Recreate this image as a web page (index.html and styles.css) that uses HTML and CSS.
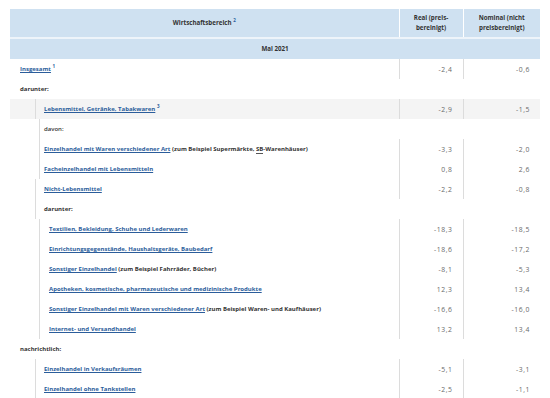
FILE: index.html
```html
<!DOCTYPE html>
<html lang="de">
<head>
  <meta charset="UTF-8" />
  <meta name="viewport" content="width=device-width, initial-scale=1.0" />
  <title>Einzelhandelsumsatz Mai 2021</title>
  <link rel="stylesheet" href="styles.css">
</head>
<body>

<table class="tabelle">
  <colgroup>
    <col class="spalte_text">
    <col class="spalte_real">
    <col class="spalte_nominal">
  </colgroup>
  <thead>
    <tr class="kopf">
      <th>Wirtschaftsbereich <sup>2</sup></th>
      <th>Real (preis-<br>bereinigt)</th>
      <th>Nominal (nicht<br>preisbereinigt)</th>
    </tr>
    <tr class="kopf_monat">
      <th colspan="3">Mai 2021</th>
    </tr>
  </thead>
  <tbody>
    <tr>
      <td><div class="stufe_0"><a href="#">Insgesamt</a> <sup>1</sup></div></td>
      <td class="zahl">-2,4</td>
      <td class="zahl">-0,6</td>
    </tr>
    <tr>
      <td colspan="3"><div class="stufe_0 fett">darunter:</div></td>
    </tr>
    <tr class="markiert">
      <td><div class="stufe_1"><a href="#">Lebensmittel, Getränke, Tabakwaren</a> <sup>3</sup></div></td>
      <td class="zahl">-2,9</td>
      <td class="zahl">-1,5</td>
    </tr>
    <tr>
      <td colspan="3"><div class="stufe_2 halbfett">davon:</div></td>
    </tr>
    <tr>
      <td><div class="stufe_2"><a href="#">Einzelhandel mit Waren verschiedener Art</a> <span class="fett">(zum Beispiel Supermärkte, <abbr>SB</abbr>-Warenhäuser)</span></div></td>
      <td class="zahl">-3,3</td>
      <td class="zahl">-2,0</td>
    </tr>
    <tr>
      <td><div class="stufe_2"><a href="#">Facheinzelhandel mit Lebensmitteln</a></div></td>
      <td class="zahl">0,8</td>
      <td class="zahl">2,6</td>
    </tr>
    <tr>
      <td><div class="stufe_1"><a href="#">Nicht-Lebensmittel</a></div></td>
      <td class="zahl">-2,2</td>
      <td class="zahl">-0,8</td>
    </tr>
    <tr>
      <td colspan="3"><div class="stufe_1 fett">darunter:</div></td>
    </tr>
    <tr>
      <td><div class="stufe_3"><a href="#">Textilien, Bekleidung, Schuhe und Lederwaren</a></div></td>
      <td class="zahl">-18,3</td>
      <td class="zahl">-18,5</td>
    </tr>
    <tr>
      <td><div class="stufe_3"><a href="#">Einrichtungsgegenstände, Haushaltsgeräte, Baubedarf</a></div></td>
      <td class="zahl">-18,6</td>
      <td class="zahl">-17,2</td>
    </tr>
    <tr>
      <td><div class="stufe_3"><a href="#">Sonstiger Einzelhandel</a> <span class="fett">(zum Beispiel Fahrräder, Bücher)</span></div></td>
      <td class="zahl">-8,1</td>
      <td class="zahl">-5,3</td>
    </tr>
    <tr>
      <td><div class="stufe_3"><a href="#">Apotheken, kosmetische, pharmazeutische und medizinische Produkte</a></div></td>
      <td class="zahl">12,3</td>
      <td class="zahl">13,4</td>
    </tr>
    <tr>
      <td><div class="stufe_3"><a href="#">Sonstiger Einzelhandel mit Waren verschiedener Art</a> <span class="fett">(zum Beispiel Waren- und Kaufhäuser)</span></div></td>
      <td class="zahl">-16,6</td>
      <td class="zahl">-16,0</td>
    </tr>
    <tr>
      <td><div class="stufe_3"><a href="#">Internet- und Versandhandel</a></div></td>
      <td class="zahl">13,2</td>
      <td class="zahl">13,4</td>
    </tr>
    <tr>
      <td colspan="3"><div class="stufe_0 fett">nachrichtlich:</div></td>
    </tr>
    <tr>
      <td><div class="stufe_1"><a href="#">Einzelhandel in Verkaufsräumen</a></div></td>
      <td class="zahl">-5,1</td>
      <td class="zahl">-3,1</td>
    </tr>
    <tr>
      <td><div class="stufe_1"><a href="#">Einzelhandel ohne Tankstellen</a></div></td>
      <td class="zahl">-2,5</td>
      <td class="zahl">-1,1</td>
    </tr>
  </tbody>
</table>

</body>
</html>
```

FILE: styles.css
```css
html, body {
  margin: 0;
  padding: 0;
  background: #fff;
  font-family: 'Open Sans', 'Noto Sans', sans-serif;
  font-size: 6px;
  color: #333;
}

.tabelle {
  margin: 9px 10px 0;
  width: 530px;
  table-layout: fixed;
  border-collapse: collapse;
}

.spalte_text { width: 389px; }
.spalte_real { width: 64px; }
.spalte_nominal { width: 77px; }

/* Kopfzeilen */
.kopf th,
.kopf_monat th {
  background-color: #cfe1f1;
  color: #333;
  font-size: 6.2px;
  font-weight: 700;
  text-align: center;
  padding: 0;
  line-height: 10px;
}

.kopf th {
  height: 28px;
  border-left: 1px solid #fff;
}

.kopf th:first-child {
  border-left: none;
}

.kopf_monat th {
  height: 20px;
  border-top: 2px solid #eef4fa;
}

sup {
  font-size: 4.5px;
  line-height: 0;
  vertical-align: 3px;
  color: #2b5d9b;
  font-weight: 700;
}

/* Datenzeilen */
tbody td {
  padding: 0;
  height: 20px;
  vertical-align: middle;
}

tbody td > div {
  height: 20px;
  line-height: 20px;
  white-space: nowrap;
}

.markiert td {
  background-color: #f4f4f4;
}

.stufe_0 {
  padding-left: 10px;
}

.stufe_1 {
  margin-left: 25px;
  padding-left: 8px;
  border-left: 1px solid #dcdcdc;
}

.stufe_2 {
  margin-left: 29px;
  padding-left: 4px;
  border-left: 1px solid #dcdcdc;
}

.stufe_3 {
  margin-left: 29px;
  padding-left: 9px;
  border-left: 1px solid #dcdcdc;
}

.fett {
  font-weight: 700;
}

.halbfett {
  font-weight: 600;
}

tbody a {
  color: #2b5d9b;
  font-weight: 700;
  text-decoration: underline;
}

abbr {
  text-decoration: none;
  border-bottom: 1px solid #555;
}

.zahl {
  text-align: right;
  padding-right: 10px;
  font-size: 6.8px;
  letter-spacing: 0.6px;
  color: #6a6a6a;
  border-left: 1px solid #dcdcdc;
}
```
